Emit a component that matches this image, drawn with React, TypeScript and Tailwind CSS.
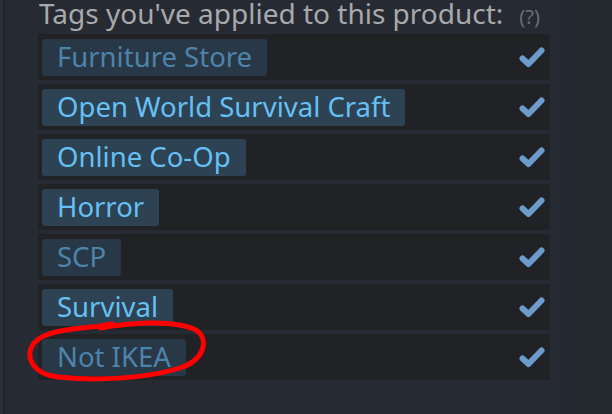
import React from "react";

const tags = [
  { name: "Furniture Store", dim: true },
  { name: "Open World Survival Craft", dim: false },
  { name: "Online Co-Op", dim: false },
  { name: "Horror", dim: false },
  { name: "SCP", dim: true },
  { name: "Survival", dim: false },
  { name: "Not IKEA", dim: true },
];

function Check() {
  return (
    <svg width="26" height="22" viewBox="0 0 26 22" className="shrink-0">
      <path
        d="M3.5 12.5 L9.5 18 L22.5 4.5"
        fill="none"
        stroke="#6c9bcc"
        strokeWidth="6"
        strokeLinecap="round"
        strokeLinejoin="round"
      />
    </svg>
  );
}

export default function App() {
  return (
    <div
      className="relative w-[612px] h-[414px] overflow-hidden flex bg-[linear-gradient(90deg,#262a33_0%,#262a33_80%,#252930_100%)]"
      style={{ fontFamily: '"Noto Sans", "Open Sans", sans-serif' }}
    >
      <div className="w-[3px] bg-[#2b2f37]" />
      <div className="w-[2px] bg-[#1f2228]" />
      <div className="flex-1 pl-[33px]">
        <div className="flex items-baseline h-[34px] leading-[28px] -mt-[1px] pl-[1px]">
          <span className="text-[28px] text-[#a7a9ab]">Tags you've applied to this product:</span>
          <span className="ml-[16px] text-[20px] text-[#666e78]">(?)</span>
        </div>
        <div className="flex flex-col gap-[4px] w-[512px] mt-[1px]">
          {tags.map((t) => (
            <div key={t.name} className="h-[46px] bg-[#212226] flex items-center justify-between pl-[4px] pr-[5px]">
              <div
                className={
                  "h-[37px] rounded-[3px] px-[15px] flex items-center text-[27.5px] leading-none " +
                  (t.dim ? "bg-[#293846] text-[#4d84ab]" : "bg-[#2d4253] text-[#66c0f4]")
                }
              >
                <span className="-mt-[1px]">{t.name}</span>
              </div>
              <Check />
            </div>
          ))}
        </div>
      </div>
      <svg className="absolute left-0 top-0 pointer-events-none" width="612" height="414">
        <path
          d="M100 328 C135 322 175 320 196 330 C210 340 204 360 180 368 C145 379 95 381 58 377 C32 374 24 356 34 343 C44 331 70 329 100 326 L112 324"
          fill="none"
          stroke="#ff0000"
          strokeWidth="5"
          strokeLinecap="round"
        />
      </svg>
    </div>
  );
}
